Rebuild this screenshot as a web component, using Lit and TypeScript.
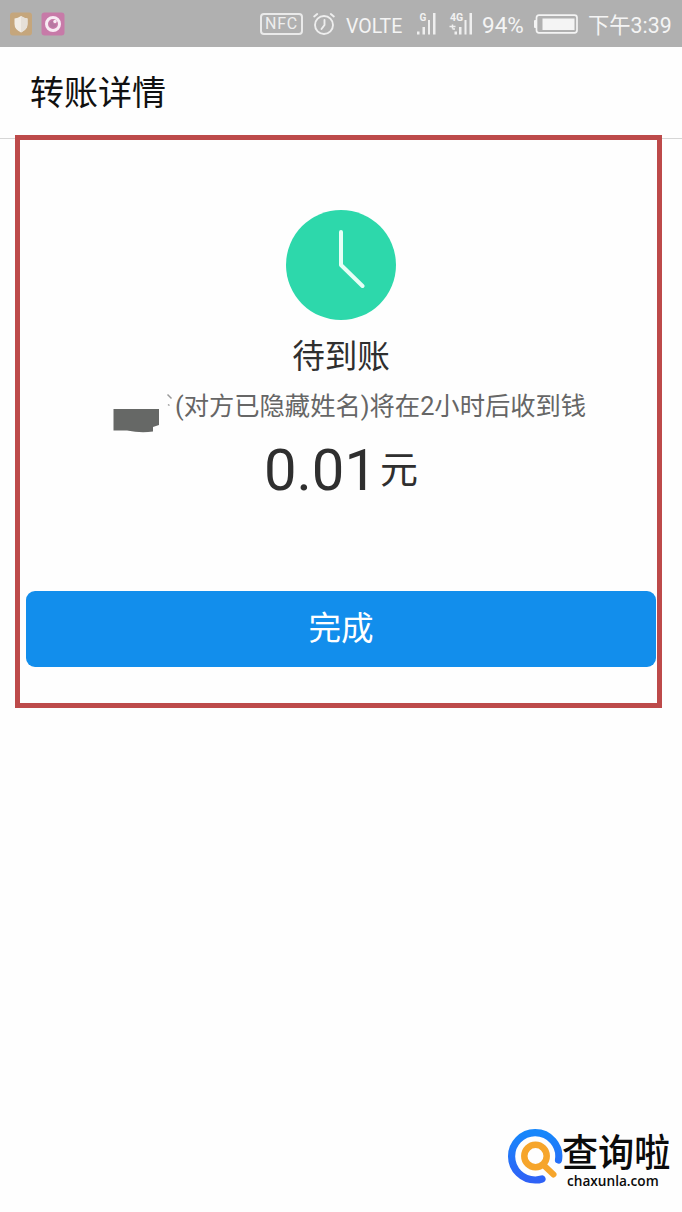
import { LitElement, html, css } from "lit";
import { customElement } from "lit/decorators.js";

@customElement("status-bar")
class StatusBar extends LitElement {
  static styles = css`
    :host {
      display: flex;
      align-items: center;
      height: 47px;
      box-sizing: border-box;
      padding: 0 10px 0 9px;
      background: #b0b0b0;
      color: #f4f4f4;
      font-family: Roboto, "Noto Sans CJK SC", sans-serif;
      white-space: nowrap;
    }
    svg { display: block; flex: none; }
    .apps { display: flex; gap: 8px; margin-right: auto; }
    .nfc {
      box-sizing: border-box;
      width: 43px;
      height: 22px;
      border: 2px solid #eaeaea;
      border-radius: 4px;
      font: 400 16px/18px Roboto, sans-serif;
      letter-spacing: 0.8px;
      text-align: center;
      margin-right: 10px;
      color: #eeeeee;
    }
    .alarm { margin-right: 11px; }
    .volte { font-size: 19.500px; line-height: 24px; width: 59px; margin: 6px 12px 0 0; }
    .signal { margin: 0 12px 2px 0; }
    .signal.lte { margin-right: 9px; }
    .pct { font-size: 22.5px; line-height: 28px; width: 43px; margin: 2px 9px 0 0; }
    .battery { margin-right: 10px; }
    .time { font-size: 21.300px; line-height: 28px; width: 84px; margin-top: 4px; }
  `;

  render() {
    return html`
      <div class="apps">
        <svg width="24" height="24" viewBox="0 0 24 24">
          <rect x="1" y="0.5" width="22" height="23" rx="3" fill="#c5a67c" />
          <path d="M12 4 Q15 6 18.500 6.500 V12 Q18.500 17.500 12 20.500 Q5.500 17.500 5.500 12 V6.500 Q9 6 12 4Z" fill="#f1ece5" />
          <path d="M12 4 Q15 6 18.500 6.500 V12 Q18.500 17.500 12 20.500Z" fill="#e6e0d8" />
        </svg>
        <svg width="24" height="24" viewBox="0 0 24 24">
          <rect x="0.500" y="0.500" width="23" height="23" rx="3" fill="#c77aa8" />
          <circle cx="12" cy="12" r="6.500" fill="none" stroke="#f8eaf3" stroke-width="3" />
          <path d="M12 12 L12.500 8.500 A3.500 3.500 0 0 0 12 15.500 A3.500 3.500 0 0 0 15.300 12Z" fill="#b778a2" />
          <circle cx="14" cy="9.500" r="1.700" fill="#f8eaf3" />
        </svg>
      </div>
      <div class="nfc">NFC</div>
      <svg class="alarm" width="22" height="24" viewBox="0 0 22 24" fill="none" stroke="#eeeeee" stroke-width="1.900" stroke-linecap="round">
        <circle cx="11" cy="13" r="9" />
        <path d="M11.500 8 V13 L8.500 17 M1.200 4.500 L4.200 2 M20.800 4.500 L17.800 2" />
      </svg>
      <div class="volte">VOLTE</div>
      <svg class="signal" width="20" height="24" viewBox="0 0 20 24">
        <path d="M0 20.500h2.500v3H0zM5.500 16h2.500v7.500H5.500zM11 9h2v14.500h-2zM16 2h2.500v21.500h-2.500z" fill="#efefef" />
        <text x="2.500" y="9.500" font-size="10" font-weight="700" fill="#f2f2f2">G</text>
      </svg>
      <svg class="signal lte" width="24" height="24" viewBox="0 0 24 24">
        <path d="M5.500 20.500h2.500v3h-2.500zM10 16h2.500v7.500h-2.500zM15.500 9h2v14.500h-2zM20.500 2h2.500v21.500h-2.500z" fill="#efefef" />
        <path d="M0.500 15.500h6M3.500 13.500v4M3.500 18h2.500" stroke="#efefef" stroke-width="1.500" fill="none" />
        <text x="1" y="9.500" font-size="10.500" font-weight="700" fill="#f2f2f2">4G</text>
      </svg>
      <div class="pct">94%</div>
      <svg class="battery" width="44" height="20" viewBox="0 0 44 20">
        <path d="M5 1.200H40.500Q43 1.200 43 3.700V16.300Q43 18.800 40.500 18.800H5Q2.500 18.800 2.500 16.300V3.700Q2.500 1.200 5 1.200Z" fill="none" stroke="#f4f4f4" stroke-width="1.700" />
        <rect x="0" y="6" width="3" height="8" rx="1" fill="#f4f4f4" />
        <rect x="8.500" y="4.500" width="32" height="11.500" fill="#f4f4f4" />
      </svg>
      <div class="time">下午3:39</div>
    `;
  }
}

@customElement("site-mark")
class SiteMark extends LitElement {
  static styles = css`
    :host { display: flex; color: #0b0b0b; }
    svg { display: block; flex: none; }
    .words { display: flex; flex-direction: column; margin-left: -1px; }
    .name {
      font: 500 38px/42px "Noto Sans CJK SC", sans-serif;
      width: 108px;
      transform: scaleX(0.95);
      transform-origin: 0 0;
      white-space: nowrap;
    }
    .url {
      font: 600 14.5px/18px "Open Sans", sans-serif;
      margin: 1px 0 0 5px;
      transform: scaleX(0.94);
      transform-origin: 0 0;
      white-space: nowrap;
    }
  `;

  render() {
    return html`
      <svg width="55" height="56" viewBox="0 0 55 56" fill="none" stroke-linecap="round">
        <defs>
          <linearGradient id="ring" x1="0" y1="0" x2="0" y2="1">
            <stop offset="0" stop-color="#1787fb" />
            <stop offset="1" stop-color="#2f62f6" />
          </linearGradient>
        </defs>
        <path d="M50.500 31 A23.600 23.600 0 0 0 27 3.700 A23.600 23.600 0 1 0 27.500 51 Q31 51 34 50" stroke="url(#ring)" stroke-width="7.200" />
        <path d="M36 36.500 L45.500 45.500" stroke="#f6a52b" stroke-width="6" />
        <circle cx="27.500" cy="27" r="11.200" stroke="#f6a52b" stroke-width="6.500" />
      </svg>
      <div class="words">
        <div class="name">查询啦</div>
        <div class="url">chaxunla.com</div>
      </div>
    `;
  }
}

@customElement("app-root")
class AppRoot extends LitElement {
  static styles = css`
    :host {
      display: block;
      position: relative;
      width: 682px;
      height: 1212px;
      overflow: hidden;
      background: #fefefe;
      color: #2f2f2f;
      font-family: Roboto, "Noto Sans CJK SC", sans-serif;
    }
    .title {
      box-sizing: border-box;
      height: 92px;
      padding-left: 30px;
      border-bottom: 1px solid #d6d6d6;
      font: 400 34px/87px "Noto Sans CJK SC", sans-serif;
      color: #111;
    }
    .body { display: flex; flex-direction: column; align-items: center; padding: 71px 26px 0; }
    svg { display: block; flex: none; }
    .state { font: 400 32.6px/44px "Noto Sans CJK SC", sans-serif; margin-top: 12px; }
    .note { display: flex; align-self: stretch; padding-left: 87px; height: 40px; margin-top: 11px; color: #666; }
    .note-text { font-size: 25.3px; line-height: 40px; white-space: nowrap; margin-left: 1px; }
    .amount { display: flex; height: 70px; line-height: 70px; margin-top: 8px; }
    .num { font-size: 58px; }
    .unit { font: 400 38px/63px "Noto Sans CJK SC", sans-serif; margin-left: 3px; }
    .done {
      align-self: stretch;
      height: 76px;
      margin: 86px 0 0;
      border-radius: 9px;
      background: #128eec;
      color: #fff;
      font: 400 32.6px/69px "Noto Sans CJK SC", sans-serif;
      text-align: center;
    }
    .frame {
      position: absolute;
      box-sizing: border-box;
      left: 15px;
      top: 135px;
      width: 647px;
      height: 573px;
      border: 5px solid #bd4a4a;
      pointer-events: none;
    }
    .mark { position: absolute; left: 508px; top: 1129px; }
  `;

  render() {
    return html`
      <status-bar></status-bar>
      <div class="title">转账详情</div>
      <div class="body">
        <svg width="110" height="110" viewBox="0 0 110 110">
          <circle cx="55" cy="55" r="55" fill="#2dd8ab" />
          <path d="M55 22 V55 L76.500 76" fill="none" stroke="#e6fff6" stroke-width="4" stroke-linecap="round" stroke-linejoin="round" />
        </svg>
        <div class="state">待到账</div>
        <div class="note">
          <svg width="61" height="46" viewBox="0 0 61 46">
            <path d="M0.500 22 H46 V38 L40 40 V44.500 Q28 46.500 14 43.500 H0.500Z" fill="#666866" />
            <path d="M54.500 7.500 L58.500 11.500 M55 17.500 L56.500 18.500" stroke="#999" stroke-width="1.500" fill="none" />
          </svg>
          <div class="note-text">(对方已隐藏姓名)将在2小时后收到钱</div>
        </div>
        <div class="amount"><span class="num">0.01</span><span class="unit">元</span></div>
        <div class="done">完成</div>
      </div>
      <div class="frame"></div>
      <site-mark class="mark"></site-mark>
    `;
  }
}
